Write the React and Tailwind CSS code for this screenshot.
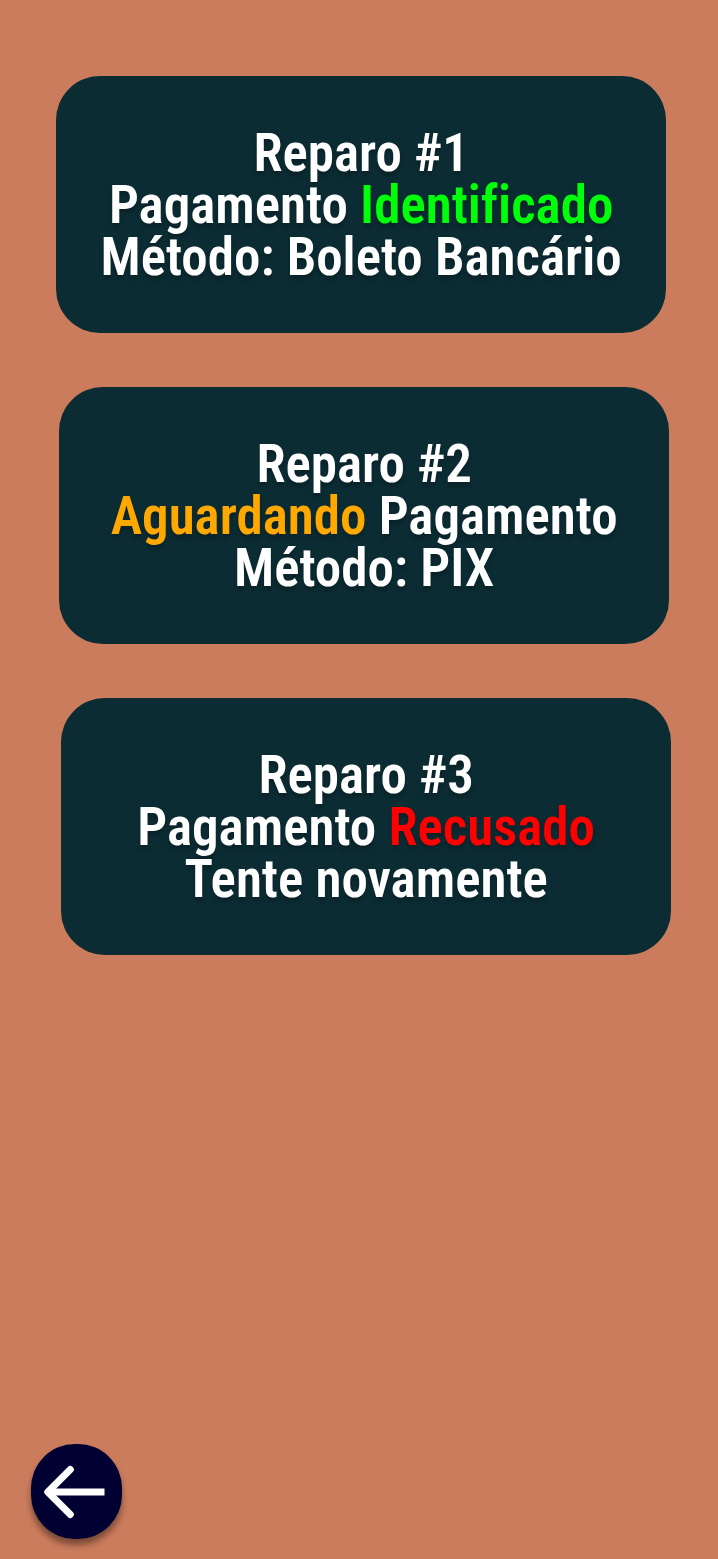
const repairs = [
  {
    title: 'Reparo #1',
    status: <>Pagamento <span className="text-[#00ff0a]">Identificado</span></>,
    detail: 'Método: Boleto Bancário',
    place: 'ml-[56px]',
  },
  {
    title: 'Reparo #2',
    status: <><span className="text-[#ffa800]">Aguardando</span> Pagamento</>,
    detail: 'Método: PIX',
    place: 'ml-[59px]',
  },
  {
    title: 'Reparo #3',
    status: <>Pagamento <span className="text-[#ff0000]">Recusado</span></>,
    detail: 'Tente novamente',
    place: 'ml-[61px]',
  },
];

function RepairCard({ title, status, detail, place }) {
  return (
    <article
      className={`${place} w-[85%] rounded-[44px] bg-[#0c2c34] pt-[51px] pb-[50px] text-center text-[53px] leading-[52px] font-semibold whitespace-nowrap text-white [font-variant-ligatures:none] [text-shadow:0_4px_4px_rgba(0,0,0,0.25)]`}
    >
      <h2>{title}</h2>
      <p>{status}</p>
      <p>{detail}</p>
    </article>
  );
}

export default function App() {
  return (
    <div className="flex min-h-screen flex-col bg-[#cb7c5c] font-['Roboto_Condensed','Open_Sans_Condensed',sans-serif]">
      <main className="flex flex-1 flex-col gap-[54px] pt-[76px]">
        {repairs.map((repair) => (
          <RepairCard key={repair.title} {...repair} />
        ))}
      </main>
      <footer className="px-[31px] pb-5">
        <button
          type="button"
          aria-label="Voltar"
          className="flex h-[95px] w-[91px] items-center rounded-[44px] bg-[#000033] pl-[13px] shadow-[0_6px_6px_rgba(0,0,0,0.4)]"
        >
          <svg className="h-[54px] w-[62px]" viewBox="0 0 62 54" fill="none" stroke="white" strokeWidth="7">
            <path d="M26.3 4.5 3.8 27l22.5 22.5" strokeLinecap="round" strokeLinejoin="round" />
            <path d="M4 27h56.5" />
          </svg>
        </button>
      </footer>
    </div>
  );
}
